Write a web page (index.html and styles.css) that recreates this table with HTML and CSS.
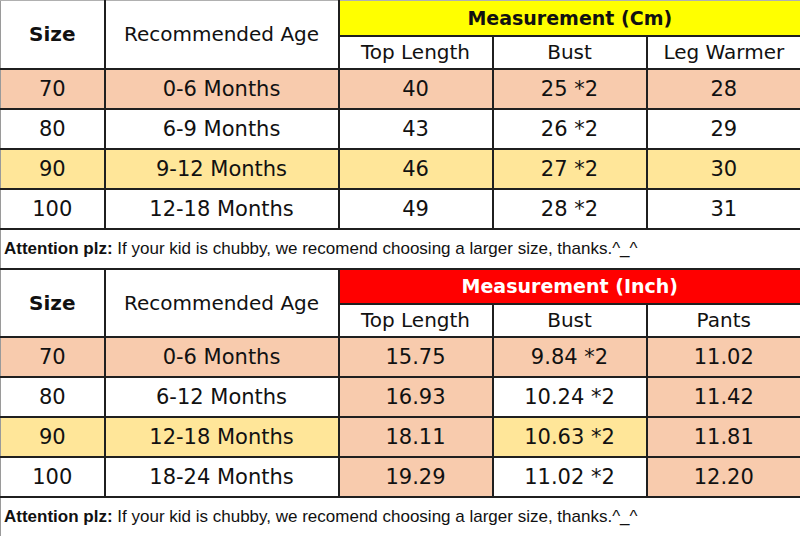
FILE: index.html
```html
<!DOCTYPE html>
<html lang="en">
<head>
<meta charset="utf-8">
<title>Size Chart</title>
<link rel="stylesheet" href="styles.css">
</head>
<body>
<table class="chart">
  <colgroup>
    <col class="c-size"><col class="c-age"><col class="c-m"><col class="c-m"><col class="c-m">
  </colgroup>
  <tbody>
    <tr class="h1 top-edge">
      <th rowspan="2" class="size-h edge-l">Size</th>
      <th rowspan="2" class="age-h">Recommended Age</th>
      <th colspan="3" class="meas cm edge-r">Measurement (Cm)</th>
    </tr>
    <tr class="h2">
      <th>Top Length</th><th>Bust</th><th class="edge-r">Leg Warmer</th>
    </tr>
    <tr class="row pink">
      <td class="edge-l">70</td><td>0-6 Months</td><td>40</td><td>25 *2</td><td class="edge-r">28</td>
    </tr>
    <tr class="row">
      <td class="edge-l">80</td><td>6-9 Months</td><td>43</td><td>26 *2</td><td class="edge-r">29</td>
    </tr>
    <tr class="row gold">
      <td class="edge-l">90</td><td>9-12 Months</td><td>46</td><td>27 *2</td><td class="edge-r">30</td>
    </tr>
    <tr class="row">
      <td class="edge-l">100</td><td>12-18 Months</td><td>49</td><td>28 *2</td><td class="edge-r">31</td>
    </tr>
    <tr class="note">
      <td colspan="5" class="edge-l edge-r"><b>Attention plz:</b> If your kid is chubby, we recomend choosing a larger size, thanks.^_^</td>
    </tr>

    <tr class="h1">
      <th rowspan="2" class="size-h edge-l">Size</th>
      <th rowspan="2" class="age-h">Recommended Age</th>
      <th colspan="3" class="meas inch edge-r">Measurement (Inch)</th>
    </tr>
    <tr class="h2">
      <th>Top Length</th><th>Bust</th><th class="edge-r">Pants</th>
    </tr>
    <tr class="row pink">
      <td class="edge-l">70</td><td>0-6 Months</td><td>15.75</td><td>9.84 *2</td><td class="edge-r">11.02</td>
    </tr>
    <tr class="row">
      <td class="edge-l">80</td><td>6-12 Months</td><td class="pink-c">16.93</td><td>10.24 *2</td><td class="pink-c edge-r">11.42</td>
    </tr>
    <tr class="row gold">
      <td class="edge-l">90</td><td>12-18 Months</td><td class="pink-c">18.11</td><td>10.63 *2</td><td class="pink-c edge-r">11.81</td>
    </tr>
    <tr class="row">
      <td class="edge-l">100</td><td>18-24 Months</td><td class="pink-c">19.29</td><td>11.02 *2</td><td class="pink-c edge-r">12.20</td>
    </tr>
    <tr class="note bottom-edge">
      <td colspan="5" class="edge-l edge-r"><b>Attention plz:</b> If your kid is chubby, we recomend choosing a larger size, thanks.^_^</td>
    </tr>
  </tbody>
</table>
</body>
</html>
```
FILE: styles.css
```css
html, body {
  margin: 0;
  padding: 0;
  background: #ffffff;
}

.chart {
  width: 800px;
  table-layout: fixed;
  border-collapse: collapse;
  font-family: "DejaVu Sans", sans-serif;
  color: #111111;
}

.c-size { width: 104px; }
.c-age { width: 234px; }
.c-m { width: 154px; }

.chart th,
.chart td {
  border: 2px solid #1f1f1f;
  padding: 0;
  text-align: center;
  vertical-align: middle;
  font-size: 21px;
  font-weight: normal;
  background: #ffffff;
  white-space: nowrap;
  overflow: hidden;
}

.chart th {
  font-size: 20px;
}

.chart .edge-l { border-left: 1px solid #9a9a9a; }
.chart .edge-r { border-right: 1px solid #9a9a9a; }
.top-edge th { border-top: 1px solid #b0b0b0; }
.bottom-edge td { border-bottom: 2px solid #5a5a5a; }

.h1 { height: 35px; }
.h2 { height: 33px; }
.row { height: 40px; }
.note { height: 40px; }

.chart .size-h {
  font-weight: bold;
  font-size: 20px;
}

.chart .meas {
  font-weight: bold;
  font-size: 19px;
}

.chart .cm { background: #ffff00; color: #111111; }
.chart .inch { background: #ff0000; color: #ffffff; }

.pink td { background: #f8cbad; }
.gold td { background: #ffe699; }
.chart td.pink-c { background: #f8cbad; }

.chart .note td {
  text-align: left;
  padding-left: 3px;
  font-family: "Liberation Sans", Arial, sans-serif;
  font-size: 17px;
  color: #111111;
}

.chart .note b {
  font-weight: bold;
}
```
